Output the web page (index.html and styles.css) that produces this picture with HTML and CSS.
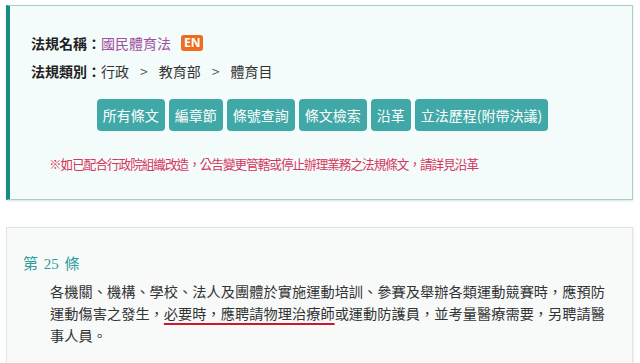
FILE: index.html
```html
<!DOCTYPE html>
<html lang="zh-Hant">
<head>
<meta charset="utf-8">
<link rel="stylesheet" href="styles.css">
</head>
<body>
<div class="page">
  <section class="law-card">
    <div class="row"><span class="label">法規名稱：</span><a class="law-name">國民體育法</a><span class="badge">EN</span></div>
    <div class="row"><span class="label">法規類別：</span><span>行政</span><span class="sep">&gt;</span><span>教育部</span><span class="sep">&gt;</span><span>體育目</span></div>
    <div class="btns">
      <a class="btn">所有條文</a>
      <a class="btn">編章節</a>
      <a class="btn">條號查詢</a>
      <a class="btn">條文檢索</a>
      <a class="btn">沿革</a>
      <a class="btn">立法歷程(附帶決議)</a>
    </div>
    <p class="notice">※如已配合行政院組織改造，公告變更管轄或停止辦理業務之法規條文，請詳見沿革</p>
  </section>
  <section class="article">
    <div class="art-no">第 25 條</div>
    <p class="body"><span class="ln">各機關、機構、學校、法人及團體於實施運動培訓、參賽及舉辦各類運動競賽時，應預防</span><span class="ln">運動傷害之發生，<span class="mark">必要時，應聘請物理治療師</span>或運動防護員，並考量醫療需要，另聘請醫</span>事人員。</p>
  </section>
</div>
</body>
</html>
```
FILE: styles.css
```css
html, body { margin: 0; padding: 0; background: #fff; }
body { font-family: "Noto Sans CJK TC", "Noto Sans", sans-serif; color: #333; }
.page { padding: 5px 7px 0 6px; display: flex; flex-direction: column; gap: 27px; }
.law-card {
  background: #f4fbfb;
  border: 1px solid #a6cfcc;
  border-left: 4px solid #1c8a83;
  box-shadow: 0 1px 2px rgba(0,0,0,0.12);
  padding: 23px 20px 25px 21px;
}
.row { display: flex; align-items: center; height: 28px; font-size: 14px; color: #333; }
.label { font-weight: bold; color: #222; }
.law-name { color: #a04ea0; }
.badge {
  margin-left: 10px; background: #ef6c1e; color: #fff; font-weight: bold;
  font-family: "Open Sans", "Noto Sans", sans-serif; font-size: 12px;
  height: 16px; line-height: 16px; padding: 0 3px; border-radius: 3px;
}
.sep { margin: 0 11px; color: #555; font-size: 14px; }
.btns { display: flex; justify-content: center; gap: 4px; margin-top: 14px; padding-left: 2px; }
.btn {
  background: #40a8a6; color: #fff; font-size: 14px; line-height: 20px;
  padding: 6px 6px; border-radius: 4px;
}
.notice { margin: 23px 0 0 18px; color: #d4365c; font-size: 12.6px; letter-spacing: -1px; line-height: 20px; }
.article {
  background: #f8fafa;
  border: 1px solid #e0e5e5;
  box-shadow: 1px 0 2px rgba(0,0,0,0.06);
  padding: 25px 16px 30px 16px;
}
.art-no { color: #2d9c9a; font-family: "Liberation Serif", "Noto Sans CJK TC", serif; font-size: 15px; line-height: 22px; word-spacing: 2px; }
.body { margin: 5px 0 0 27px; width: 555px; font-size: 14.2px; line-height: 22px; color: #333; }
.ln { display: block; text-align: justify; text-align-last: justify; }
.mark { text-decoration: underline; text-decoration-color: #d0162e; text-decoration-thickness: 2px; text-underline-offset: 4px; }
```
